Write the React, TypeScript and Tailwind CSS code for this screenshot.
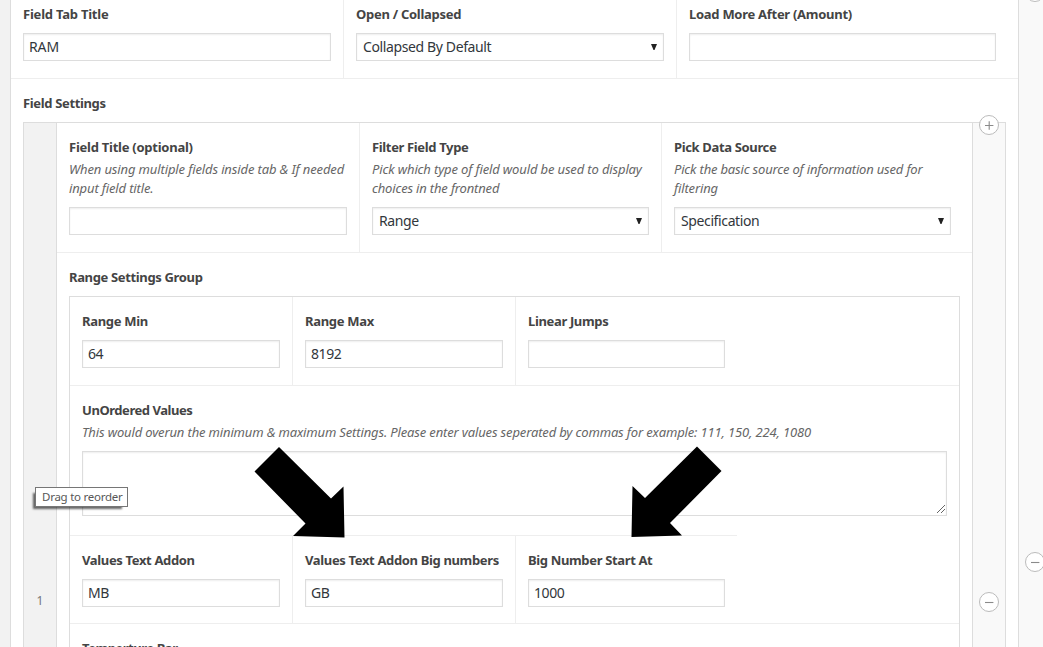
import type { ReactNode } from "react";

function Label({ children, className = "tracking-[-0.35px]" }: { children: ReactNode; className?: string }) {
  return (
    <div className="flex h-[19px] items-center">
      <span className={`whitespace-nowrap text-[13px] font-bold leading-[19px] text-[#444] ${className}`}>{children}</span>
    </div>
  );
}

function Line({ children, className = "tracking-[-0.14px]" }: { children: ReactNode; className?: string }) {
  return (
    <div className="flex h-[19px] items-center">
      <span className={`whitespace-nowrap text-[13px] italic leading-[19px] text-[#666] ${className}`}>{children}</span>
    </div>
  );
}

function Input({ value = "", className = "", textClass = "tracking-[-0.4px]" }: { value?: string; className?: string; textClass?: string }) {
  return (
    <div className={`flex h-7 shrink-0 items-center border border-[#ddd] bg-white pb-0.5 pl-[5px] shadow-[inset_0_1px_2px_rgba(0,0,0,0.07)] ${className}`}>
      <span className={`whitespace-nowrap text-[14px] leading-[19px] text-[#32373c] ${textClass}`}>{value}</span>
    </div>
  );
}

function Select({ value, className = "" }: { value: string; className?: string }) {
  return (
    <div className={`flex h-7 shrink-0 items-center justify-between border border-[#ddd] bg-white pb-0.5 pl-1.5 pr-[6px] shadow-[inset_0_1px_2px_rgba(0,0,0,0.07)] ${className}`}>
      <span className="whitespace-nowrap text-[14px] leading-[19px] tracking-[-0.38px] text-[#32373c]">{value}</span>
      <svg width="6" height="6" viewBox="0 0 6 6" className="mt-px">
        <path d="M0 0H6L3.5 6H2.5Z" fill="#222" />
      </svg>
    </div>
  );
}

function RoundButton({ plus = false, className = "" }: { plus?: boolean; className?: string }) {
  return (
    <svg className={`absolute ${className}`} width="20" height="20" viewBox="0 0 20 20">
      <circle cx="10" cy="10" r="9.5" fill="#fff" stroke="#bbb" />
      <path d={plus ? "M6 10.5H14.4M10.2 6.3V14.7" : "M6 10.5H14.4"} stroke="#8a8a8a" strokeWidth="1.1" fill="none" />
    </svg>
  );
}

export default function App() {
  return (
    <div className="relative flex h-[647px] w-[1043px] overflow-hidden bg-white font-['Noto_Sans','Open_Sans',sans-serif]">
      <div className="w-[11px] shrink-0 border-r border-[#ddd] bg-[#f2f2f2]" />

      <div className="w-[1007px] shrink-0">
        <div className="flex h-[79px] border-b border-[#eee]">
          <div className="w-[332px] pl-3 pt-[5px]">
            <Label className="tracking-[-0.22px]">Field Tab Title</Label>
            <Input value="RAM" className="mt-[9px] w-[308px]" textClass="tracking-[-0.1px]" />
          </div>
          <div className="w-[333px] border-l border-[#eee] pl-3 pt-[5px]">
            <Label className="tracking-[-0.28px]">Open / Collapsed</Label>
            <Select value="Collapsed By Default" className="mt-[9px] w-[308px]" />
          </div>
          <div className="w-[342px] border-l border-[#eee] pl-3 pt-[5px]">
            <Label className="tracking-[-0.28px]">Load More After (Amount)</Label>
            <Input className="mt-[9px] w-[307px]" />
          </div>
        </div>

        <div className="pl-3 pt-[15px]">
          <Label>Field Settings</Label>

          <div className="mt-[9px] flex h-[600px] w-[983px] border border-[#ddd]">
            <div className="w-[33px] shrink-0 border-r border-[#ddd] bg-[#f2f2f2] pt-[468px] text-center text-[12px] leading-[20px] text-[#777]">1</div>

            <div className="w-[915px] shrink-0">
              <div className="flex h-[130px] border-b border-[#eee]">
                <div className="w-[302px] pl-3 pt-[15px]">
                  <Label className="tracking-[-0.25px]">Field Title (optional)</Label>
                  <div className="pt-[3px]">
                    <Line className="tracking-[-0.125px]">When using multiple fields inside tab &amp; If needed</Line>
                    <Line>input field title.</Line>
                  </div>
                  <Input className="mt-[9px] w-[278px]" />
                </div>
                <div className="w-[302px] border-l border-[#eee] pl-3 pt-[15px]">
                  <Label>Filter Field Type</Label>
                  <div className="pt-[3px]">
                    <Line>Pick which type of field would be used to display</Line>
                    <Line className="tracking-[-0.17px]">choices in the frontned</Line>
                  </div>
                  <Select value="Range" className="mt-[9px] w-[277px]" />
                </div>
                <div className="w-[311px] border-l border-[#eee] pl-3 pt-[15px]">
                  <Label>Pick Data Source</Label>
                  <div className="pt-[3px]">
                    <Line className="tracking-[-0.18px]">Pick the basic source of information used for</Line>
                    <Line>filtering</Line>
                  </div>
                  <Select value="Specification" className="mt-[9px] w-[277px]" />
                </div>
              </div>

              <div className="pl-3 pt-[15px]">
                <Label>Range Settings Group</Label>
                <div className="mt-[9px] w-[891px] border border-[#ddd]">
                  <div className="flex h-[89px] border-b border-[#eee]">
                    <div className="w-[222px] pl-3 pt-[15px]">
                      <Label className="tracking-[-0.3px]">Range Min</Label>
                      <Input value="64" className="mt-[9px] w-[198px]" />
                    </div>
                    <div className="w-[223px] border-l border-[#eee] pl-3 pt-[15px]">
                      <Label className="tracking-[-0.3px]">Range Max</Label>
                      <Input value="8192" className="mt-[9px] w-[198px]" />
                    </div>
                    <div className="border-l border-[#eee] pl-3 pt-[15px]">
                      <Label>Linear Jumps</Label>
                      <Input className="mt-[9px] w-[197px]" />
                    </div>
                  </div>

                  <div className="h-[149px] pl-3 pt-[15px]">
                    <Label className="tracking-[-0.45px]">UnOrdered Values</Label>
                    <div className="pt-[3px]">
                      <Line className="tracking-[-0.148px]">This would overun the minimum &amp; maximum Settings. Please enter values seperated by commas for example: 111, 150, 224, 1080</Line>
                    </div>
                    <div className="mt-[9px] flex h-[65px] w-[865px] items-end justify-end border border-[#ddd] bg-white p-px shadow-[inset_0_1px_2px_rgba(0,0,0,0.07)]">
                      <svg width="9" height="9" viewBox="0 0 9 9" shapeRendering="crispEdges">
                        <path d="M0.5 8.5L8.5 0.5M4.5 8.5L8.5 4.5" stroke="#666" fill="none" />
                      </svg>
                    </div>
                  </div>

                  <div className="flex h-[89px] border-b border-[#eee]">
                    <div className="w-[222px] border-t border-[#eee] pl-3 pt-[15px]">
                      <Label>Values Text Addon</Label>
                      <Input value="MB" className="mt-[9px] w-[198px]" />
                    </div>
                    <div className="w-[223px] border-l border-t border-[#eee] pl-3 pt-[15px]">
                      <Label>Values Text Addon Big numbers</Label>
                      <Input value="GB" className="mt-[9px] w-[198px]" />
                    </div>
                    <div className="w-[222px] border-l border-t border-[#eee] pl-3 pt-[15px]">
                      <Label>Big Number Start At</Label>
                      <Input value="1000" className="mt-[9px] w-[197px]" />
                    </div>
                  </div>

                  <div className="h-24 pl-3 pt-[15px]">
                    <Label className="tracking-[-0.45px]">Temperture Bar</Label>
                  </div>
                </div>
              </div>
            </div>

            <div className="relative grow border-l border-[#ddd] bg-[#f9f9f9]">
              <RoundButton plus className="left-[6px] top-[-8px]" />
              <RoundButton className="left-[6px] top-[469px]" />
            </div>
          </div>
        </div>
      </div>

      <div className="relative grow border-l border-[#ddd] bg-[#f9f9f9]">
        <RoundButton className="left-[6px] top-[-18px]" />
        <RoundButton className="left-[6px] top-[552px]" />
      </div>

      <div className="absolute left-[35px] top-[487px] flex h-5 w-[93px] items-center border border-[#767676] bg-white pl-1.5 shadow-[-4px_4px_2px_-2px_rgba(0,0,0,0.6)]">
        <span className="whitespace-nowrap text-[11.5px] leading-4 tracking-[-0.25px] text-[#575757]">Drag to reorder</span>
      </div>

      <svg className="absolute left-[250px] top-[440px]" width="480" height="104" viewBox="250 440 480 104">
        <path d="M279 447L331 498.500L343.500 486.500L344.500 537.500L293 536L305.500 523.500L254.500 471.500Z" fill="#000" />
        <path d="M697 446.500L721.500 471L670 523L682 535.500L631.500 537L632.500 486L645 498Z" fill="#000" />
      </svg>
    </div>
  );
}
